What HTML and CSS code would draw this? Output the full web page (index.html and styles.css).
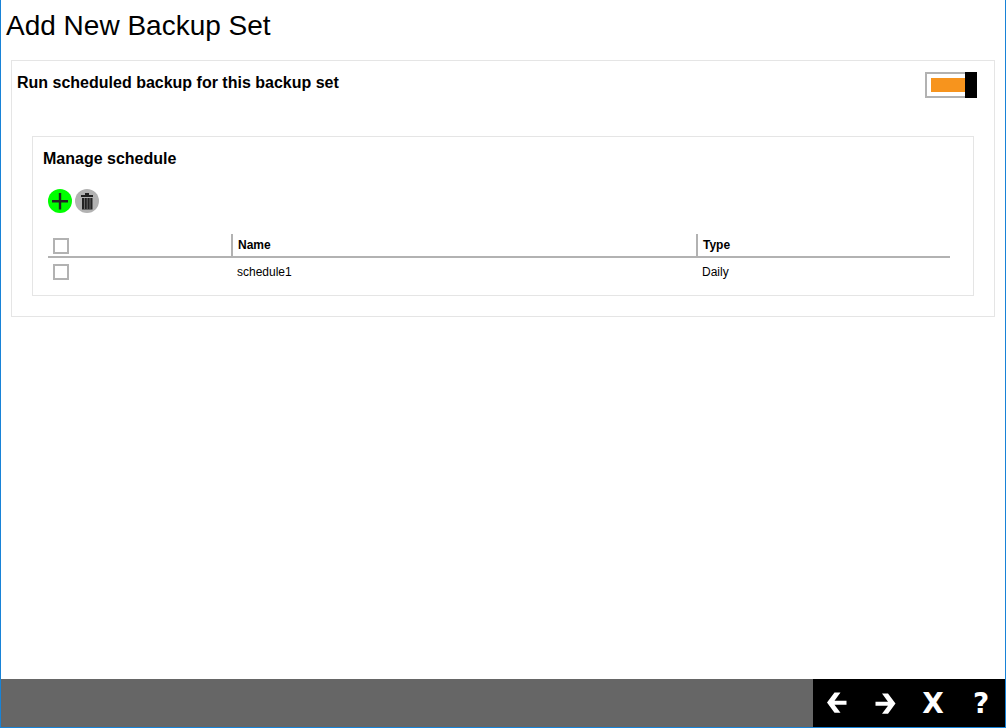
FILE: index.html
```html
<!DOCTYPE html>
<html lang="en">

<head>
    <meta charset="UTF-8">
    <title>Add New Backup Set</title>
    <meta name="viewport" content="width=device-width, initial-scale=1">
    <link rel="stylesheet" href="styles.css">
</head>

<body>
    <div class="window">
        <h1>Add New Backup Set</h1>

        <main class="panel">
            <!-- on/off switch for the schedule -->
            <div class="panel-head">
                <h2><label for="runSchedule">Run scheduled backup for this backup set</label></h2>
                <input class="switch" type="checkbox" id="runSchedule" checked>
            </div>

            <section class="schedule">
                <h2>Manage schedule</h2>
                <div class="tools">
                    <button class="tool add" type="button" aria-label="Add">
                        <svg width="24" height="24" viewBox="0 0 24 24">
                            <path d="M4 12.300h16M12 4v16.500" stroke="#222" stroke-width="2.400" fill="none" />
                        </svg>
                    </button>
                    <button class="tool delete" type="button" aria-label="Delete">
                        <svg width="24" height="24" viewBox="0 0 24 24" fill="#222">
                            <path d="M6 6h4V4h4v2h4v2H6z" />
                            <path d="M7 9h10.500v11.500H7z" />
                            <path d="M9.500 9v11M12.200 9v11M15 9v11" stroke="#999" stroke-width=".6" />
                        </svg>
                    </button>
                </div>

                <table>
                    <thead>
                        <tr>
                            <th class="col-check"><input class="check" type="checkbox" aria-label="Select all"></th>
                            <th class="col-name">Name</th>
                            <th>Type</th>
                        </tr>
                    </thead>
                    <tbody>
                        <tr>
                            <td><input class="check" type="checkbox" aria-label="Select schedule1"></td>
                            <td>schedule1</td>
                            <td>Daily</td>
                        </tr>
                    </tbody>
                </table>
            </section>
        </main>

        <footer>
            <button type="button" aria-label="Previous">
                <svg width="24" height="24" viewBox="0 0 24 24">
                    <path d="M2 11.500L9.500 1.500h6L9.500 9.700h12v4h-12l6 8h-6z" fill="#fff" />
                </svg>
            </button>
            <button type="button" aria-label="Next">
                <svg width="24" height="24" viewBox="0 0 24 24">
                    <path d="M22.500 12.500L15 2.500H9l6 8.200H2.500v4H15l-6 8h6z" fill="#fff" />
                </svg>
            </button>
            <button type="button" aria-label="Cancel">X</button>
            <button type="button" aria-label="Help">?</button>
        </footer>
    </div>
</body>

</html>
```
FILE: styles.css
```css
* {
    box-sizing: border-box;
}

body {
    margin: 0;
    background-color: #ffffff;
    color: #000000;
    font-family: "Liberation Sans", Arial, sans-serif;
    font-size: 12px;
}

.window {
    display: flex;
    flex-direction: column;
    min-height: 100vh;
    border: 1px solid #1883d7;
    border-top: 0;
}

h1 {
    margin: 0;
    padding: 6px 5px 14px;
    font-size: 28px;
    font-weight: normal;
    line-height: 40px;
}

h2 {
    margin: 0;
    font-size: 16px;
    line-height: 22px;
}

.panel {
    margin: 0 10px;
    padding: 11px 20px 20px;
    border: 1px solid #e5e5e5;
}

.panel-head {
    display: flex;
    justify-content: space-between;
    align-items: flex-start;
    margin: 0 -3px 38px -15px;
}

.switch {
    appearance: none;
    width: 52px;
    height: 26px;
    margin: 0;
    padding: 4px;
    border: 2px solid #b2b2b2;
    background-color: #ffffff;
    background-clip: content-box;
}

.switch:checked {
    border-right: 12px solid #000000;
    border-image: linear-gradient(to right, #b2b2b2 40px, #000000 40px) 2 12 2 2;
    padding-right: 0;
    background-color: #f7941d;
}

.schedule {
    padding: 11px 23px 13px 15px;
    border: 1px solid #e5e5e5;
}

.schedule h2 {
    margin-left: -5px;
}

.tools {
    display: flex;
    gap: 3px;
    margin: 19px 0 21px;
}

.tool {
    width: 24px;
    height: 24px;
    padding: 0;
    border: 0;
    border-radius: 50%;
}

.tool svg {
    display: block;
}

.add {
    background-color: #00ff00;
}

.delete {
    background-color: #b2b2b2;
}

table {
    width: 100%;
    table-layout: fixed;
    border-collapse: separate;
    border-spacing: 0;
}

th,
td {
    height: 24px;
    padding: 0 5px;
    text-align: left;
}

th {
    border-bottom: 2px solid #b2b2b2;
}

th + th {
    border-left: 2px solid #b2b2b2;
}

.col-check {
    width: 183px;
}

.col-name {
    width: 465px;
}

td {
    padding-top: 3px;
}

td + td {
    padding-left: 6px;
}

.check {
    appearance: none;
    display: block;
    width: 16px;
    height: 16px;
    margin: 2px 0 0;
    border: 2px solid #b2b2b2;
    background-color: #ffffff;
}

td .check {
    margin-top: 0;
}

footer {
    display: flex;
    justify-content: flex-end;
    margin-top: auto;
    background-color: #666666;
}

footer button {
    display: flex;
    justify-content: center;
    align-items: center;
    width: 48px;
    height: 48px;
    padding: 0;
    border: 0;
    background-color: #000000;
    color: #ffffff;
    font-family: "DejaVu Sans", sans-serif;
    font-size: 28px;
    font-weight: bold;
}
```
